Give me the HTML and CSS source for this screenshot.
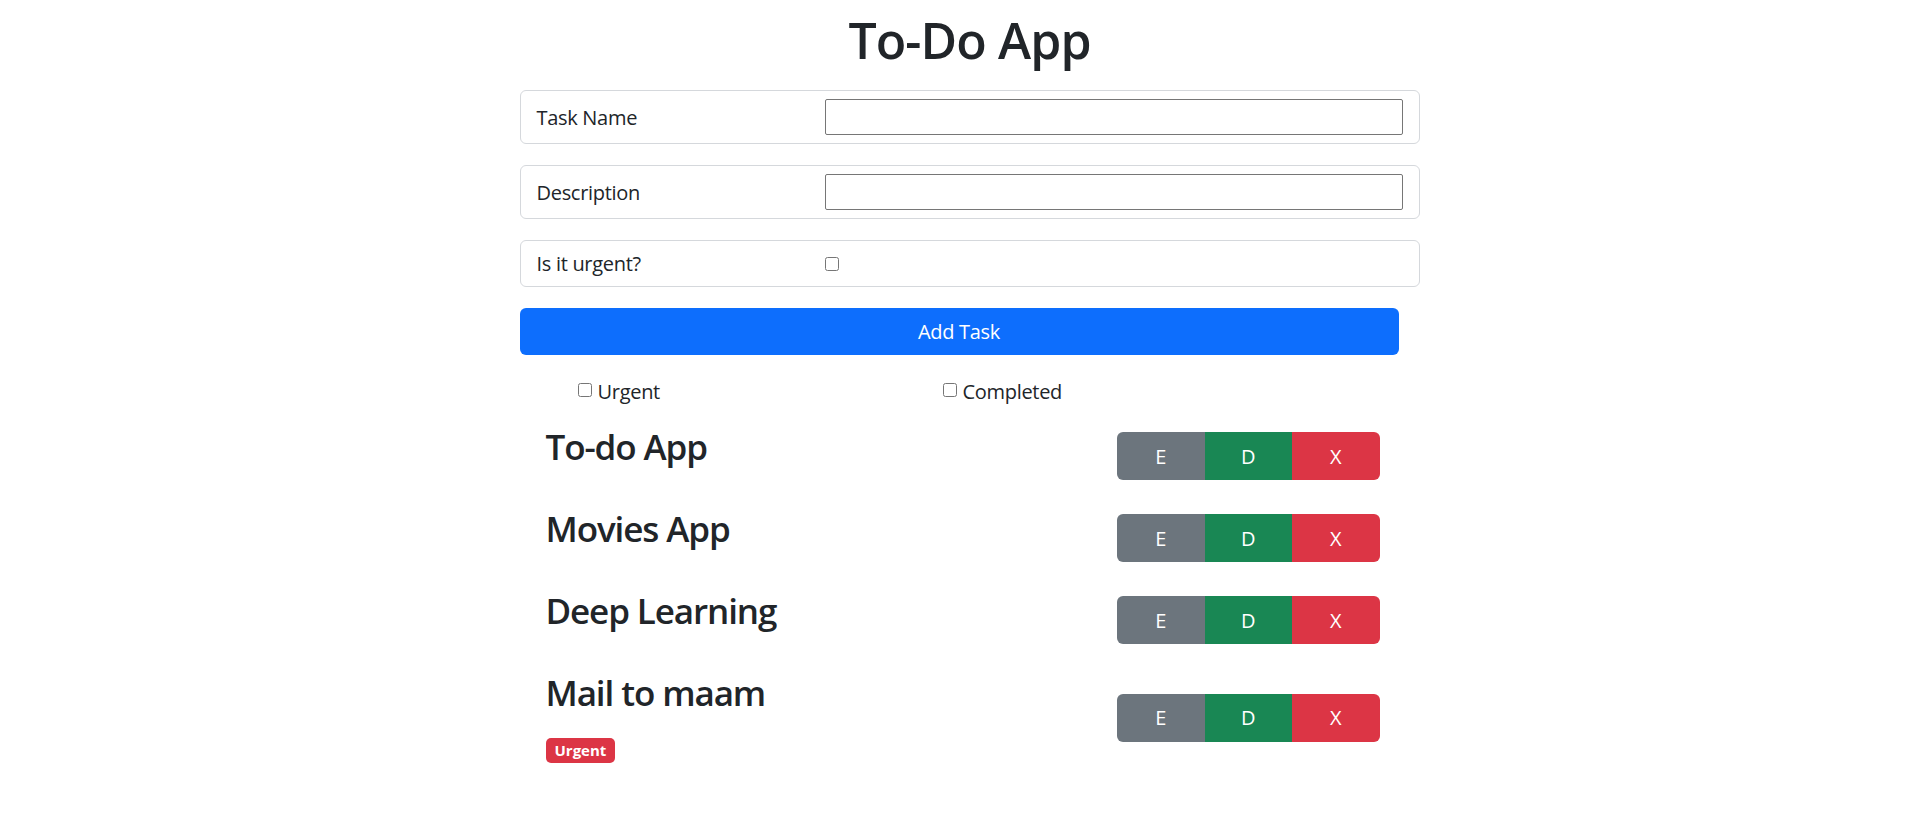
FILE: index.html
```html
<!DOCTYPE html>
<html lang="en">
<head>
<meta charset="utf-8">
<title>To-Do App</title>
<link rel="stylesheet" href="styles.css">
</head>
<body>
<div class="page">
  <main class="app">
    <h1 class="app-title">To-Do App</h1>
    <form class="task-form">
      <div class="field-card">
        <label class="field-label" for="taskName">Task Name</label>
        <input class="field-input" id="taskName" type="text">
      </div>
      <div class="field-card">
        <label class="field-label" for="taskDesc">Description</label>
        <input class="field-input" id="taskDesc" type="text">
      </div>
      <div class="field-card field-card-check">
        <label class="field-label" for="taskUrgent">Is it urgent?</label>
        <div class="field-check"><input class="checkbox" id="taskUrgent" type="checkbox"></div>
      </div>
      <button type="button" class="btn-add">Add Task</button>
    </form>

    <div class="filters">
      <label class="filter filter-urgent"><input class="checkbox" type="checkbox"> Urgent</label>
      <label class="filter filter-completed"><input class="checkbox" type="checkbox"> Completed</label>
    </div>

    <ul class="task-list">
      <li class="task-row">
        <div class="task-info"><h3 class="task-title">To-do App</h3></div>
        <div class="btn-group">
          <button class="btn btn-edit">E</button><button class="btn btn-done">D</button><button class="btn btn-del">X</button>
        </div>
      </li>
      <li class="task-row">
        <div class="task-info"><h3 class="task-title">Movies App</h3></div>
        <div class="btn-group">
          <button class="btn btn-edit">E</button><button class="btn btn-done">D</button><button class="btn btn-del">X</button>
        </div>
      </li>
      <li class="task-row">
        <div class="task-info"><h3 class="task-title">Deep Learning</h3></div>
        <div class="btn-group">
          <button class="btn btn-edit">E</button><button class="btn btn-done">D</button><button class="btn btn-del">X</button>
        </div>
      </li>
      <li class="task-row">
        <div class="task-info">
          <h3 class="task-title">Mail to maam</h3>
          <span class="badge">Urgent</span>
        </div>
        <div class="btn-group">
          <button class="btn btn-edit">E</button><button class="btn btn-done">D</button><button class="btn btn-del">X</button>
        </div>
      </li>
    </ul>
  </main>
</div>
</body>
</html>
```

FILE: styles.css
```css
* { box-sizing: border-box; }

html, body {
  margin: 0;
  padding: 0;
  background: #fff;
}

body {
  font-family: "Open Sans", "Noto Sans", "Liberation Sans", sans-serif;
  font-size: 20px;
  color: #212529;
}

.page {
  padding-left: 19px;
}

.app {
  width: 900px;
  margin: 0 auto;
  padding-top: 10px;
}

.app-title {
  margin: 0 0 20px;
  font-size: 50px;
  font-weight: 600;
  letter-spacing: -0.9px;
  line-height: 60px;
  text-align: center;
}

.task-form {
  margin: 0;
}

.field-card {
  display: grid;
  grid-template-columns: 1fr 2fr;
  align-items: center;
  height: 54px;
  padding: 0 16px;
  margin-bottom: 21px;
  border: 1px solid #d5d8dc;
  border-radius: 6px;
}

.field-card-check {
  height: 47px;
}

.field-label {
  font-size: 20px;
  letter-spacing: -0.3px;
}

.field-input {
  height: 36px;
  width: 100%;
  border: 1px solid #767676;
  border-radius: 2px;
  font: inherit;
}

.field-check {
  display: flex;
  align-items: center;
}

.checkbox {
  width: 14px;
  height: 14px;
  margin: 0;
}

.btn-add {
  display: block;
  width: 879px;
  height: 47px;
  margin: 0;
  border: 0;
  border-radius: 6px;
  background: #0d6efd;
  color: #fff;
  font: inherit;
  font-size: 20px;
  letter-spacing: -0.3px;
}

.filters {
  display: flex;
  padding: 24px 0 0 58px;
  height: 71px;
}

.filter {
  display: flex;
  align-items: center;
  gap: 6px;
  height: 25px;
  font-size: 20px;
  letter-spacing: -0.3px;
}

.filter .checkbox {
  position: relative;
  top: -2px;
}

.filter-urgent {
  width: 365px;
}

.task-list {
  list-style: none;
  margin: 0;
  padding: 0 40px 0 26px;
}

.task-row {
  display: flex;
  align-items: center;
  justify-content: space-between;
  margin-bottom: 22px;
}

.task-info {
  display: flex;
  flex-direction: column;
  align-items: flex-start;
}

.task-title {
  margin: 0 0 18px;
  font-size: 35px;
  font-weight: 600;
  letter-spacing: -1.1px;
  line-height: 42px;
}

.badge {
  display: block;
  margin-top: 6px;
  padding: 5px 9px;
  height: 25px;
  background: #dc3545;
  color: #fff;
  border-radius: 5px;
  font-size: 15px;
  font-weight: 700;
  line-height: 15px;
}

.btn-group {
  display: flex;
  border-radius: 6px;
  overflow: hidden;
}

.btn {
  width: 87.5px;
  height: 48px;
  border: 0;
  margin: 0;
  color: #fff;
  font: inherit;
  font-size: 20px;
}

.btn-edit { background: #6c757d; }
.btn-done { background: #198754; }
.btn-del { background: #dc3545; }
```
